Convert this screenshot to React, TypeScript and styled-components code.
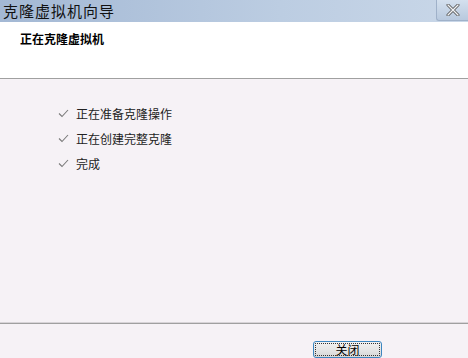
import React from 'react';
import styled, { createGlobalStyle } from 'styled-components';

const GlobalStyle = createGlobalStyle`
  html, body {
    margin: 0;
    padding: 0;
    width: 468px;
    height: 358px;
    overflow: hidden;
  }
  body {
    font-family: "Noto Sans CJK SC", "DejaVu Sans", sans-serif;
  }
`;

const steps = ['正在准备克隆操作', '正在创建完整克隆', '完成'];

const Check: React.FC = () => (
  <svg width="11" height="9" viewBox="0 0 11 9">
    <path d="M1 4.5 L4 7.5 L10 1" fill="none" stroke="#7a7a7a" strokeWidth="1.1" />
  </svg>
);

const App: React.FC = () => {
  return (
    <Window>
      <GlobalStyle />
      <TitleBar>
        <TitleText>克隆虚拟机向导</TitleText>
        <CloseBox>
          <svg width="14" height="12" viewBox="0 0 14 12">
            <path d="M2 1 L12 11 M12 1 L2 11" stroke="#555" strokeWidth="3" strokeLinecap="round" />
            <path d="M2 1 L12 11 M12 1 L2 11" stroke="#f2f4f7" strokeWidth="1.4" strokeLinecap="round" />
          </svg>
        </CloseBox>
      </TitleBar>
      <Header>
        <HeaderTitle>正在克隆虚拟机</HeaderTitle>
      </Header>
      <Body>
        <StepList>
          {steps.map(s => (
            <StepRow key={s}>
              <Check />
              <span>{s}</span>
            </StepRow>
          ))}
        </StepList>
      </Body>
      <Footer>
        <Button>关闭</Button>
      </Footer>
    </Window>
  );
};

const Window = styled.div`
  width: 468px;
  height: 358px;
  display: flex;
  flex-direction: column;
  background: #f6f2f6;
`;

const TitleBar = styled.div`
  height: 22px;
  display: flex;
  align-items: flex-start;
  justify-content: space-between;
  background: linear-gradient(to right, #a3b8d4, #bccde2 60%, #c9d7e8);
`;

const TitleText = styled.div`
  font-family: "Noto Sans CJK SC", sans-serif;
  font-size: 15px;
  line-height: 22px;
  padding-left: 3px;
  letter-spacing: 1px;
  color: #111;
`;

const CloseBox = styled.div`
  width: 31px;
  height: 20px;
  display: flex;
  align-items: center;
  justify-content: center;
  background: linear-gradient(#d4e0ee, #b8c9de);
  border-left: 1px solid #9fb1c9;
  border-bottom: 1px solid #9fb1c9;
  border-bottom-left-radius: 3px;
`;

const Header = styled.div`
  height: 57px;
  background: #ffffff;
  border-bottom: 1px solid #a0a0a0;
  box-sizing: border-box;
  padding: 8px 0 0 20px;
`;

const HeaderTitle = styled.div`
  font-size: 12px;
  font-weight: bold;
  color: #000;
`;

const Body = styled.div`
  flex: 1;
  padding: 26px 0 0 58px;
  border-bottom: 1px solid #a0a0a0;
  box-shadow: 0 -1px 0 #d8d4d8 inset;
`;

const StepList = styled.div`
  display: flex;
  flex-direction: column;
  gap: 8px;
`;

const StepRow = styled.div`
  display: flex;
  align-items: center;
  gap: 7px;
  height: 17px;
  font-size: 12px;
  color: #222;
`;

const Footer = styled.div`
  height: 34px;
  box-sizing: border-box;
  padding: 12px 0 0 313px;
`;

const Button = styled.button`
  width: 69px;
  height: 17px;
  padding: 0;
  font-family: "Noto Sans CJK SC", sans-serif;
  font-size: 12px;
  line-height: 13px;
  color: #000;
  border: 1px solid #3c86c0;
  border-radius: 3px;
  background: linear-gradient(#f2f2f2, #e6e6e6 50%, #d6d6d6);
  outline: 1px dotted #333;
  outline-offset: -3px;
`;

export default App;
